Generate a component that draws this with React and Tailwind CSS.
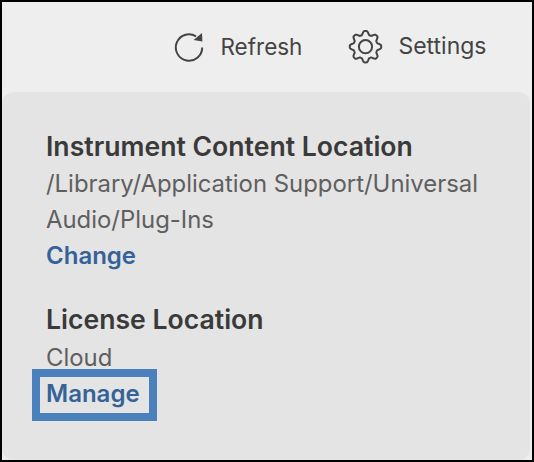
const GEAR_POINTS = Array.from({ length: 160 }, (_, i) => {
    const a = (i / 160) * Math.PI * 2
    const wave = Math.max(-1, Math.min(1, 1.35 * Math.cos(8 * a)))
    const r = 13.9 + 1.8 * wave
    return `${(20.5 + r * Math.sin(a)).toFixed(2)},${(20.7 - r * Math.cos(a)).toFixed(2)}`
}).join(' ')

function RefreshIcon() {
    return (
        <svg viewBox="0 0 40 40" className="w-[40px] h-[40px]" fill="none">
            <path d="M33.2 20.5A13.2 13.2 0 1 1 27 9.3" stroke="#444444" strokeWidth="2" />
            <path d="M33 6L33.4 14.6L24.6 13Z" fill="#444444" />
        </svg>
    )
}

function GearIcon() {
    return (
        <svg viewBox="0 0 42 42" className="w-[42px] h-[42px]" fill="none" stroke="#444444" strokeWidth="2">
            <polygon points={GEAR_POINTS} strokeLinejoin="round" />
            <circle cx="20.5" cy="20.7" r="6.6" />
        </svg>
    )
}

export default function App() {
    return (
        <div className="w-[534px] h-[462px] border-2 border-black bg-[#eeeeee] flex flex-col overflow-hidden font-['Inter',sans-serif]">
            {/* Toolbar */}
            <div className="h-[90px] shrink-0 flex items-center justify-end gap-[43px] pr-[45.5px] pb-[1px] text-[#444444]">
                <button className="flex items-center gap-[11px] text-[22.5px]">
                    <RefreshIcon />
                    <span>Refresh</span>
                </button>
                <button className="flex items-center gap-[11px] text-[23px]">
                    <GearIcon />
                    <span>Settings</span>
                </button>
            </div>

            {/* Locations panel */}
            <div className="flex-1 mr-[2px] rounded-[12px] bg-[#e4e4e4] pl-[44px] pr-[40px] pt-[36px]">
                <h2 className="mb-[2px] text-[26.6px] leading-[36px] font-semibold text-[#3a3a3a]">Instrument Content Location</h2>
                <p className="text-[23.9px] leading-[36px] text-[#5f5f5f]">/Library/Application Support/Universal Audio/Plug-Ins</p>
                <a className="block text-[24px] leading-[36px] font-semibold text-[#356298]">Change</a>

                <h2 className="mt-[27px] mb-[2.75px] text-[26.6px] leading-[36px] font-semibold text-[#3a3a3a]">License Location</h2>
                <p className="text-[23.9px] leading-[36px] text-[#5f5f5f]">Cloud</p>
                <a className="relative block w-fit text-[24px] leading-[36px] font-semibold text-[#356298]">
                    Manage
                    <span className="absolute left-[-14px] top-[-6.75px] w-[125px] h-[52px] border-[8px] border-[#4a81bd]" />
                </a>
            </div>
        </div>
    )
}
